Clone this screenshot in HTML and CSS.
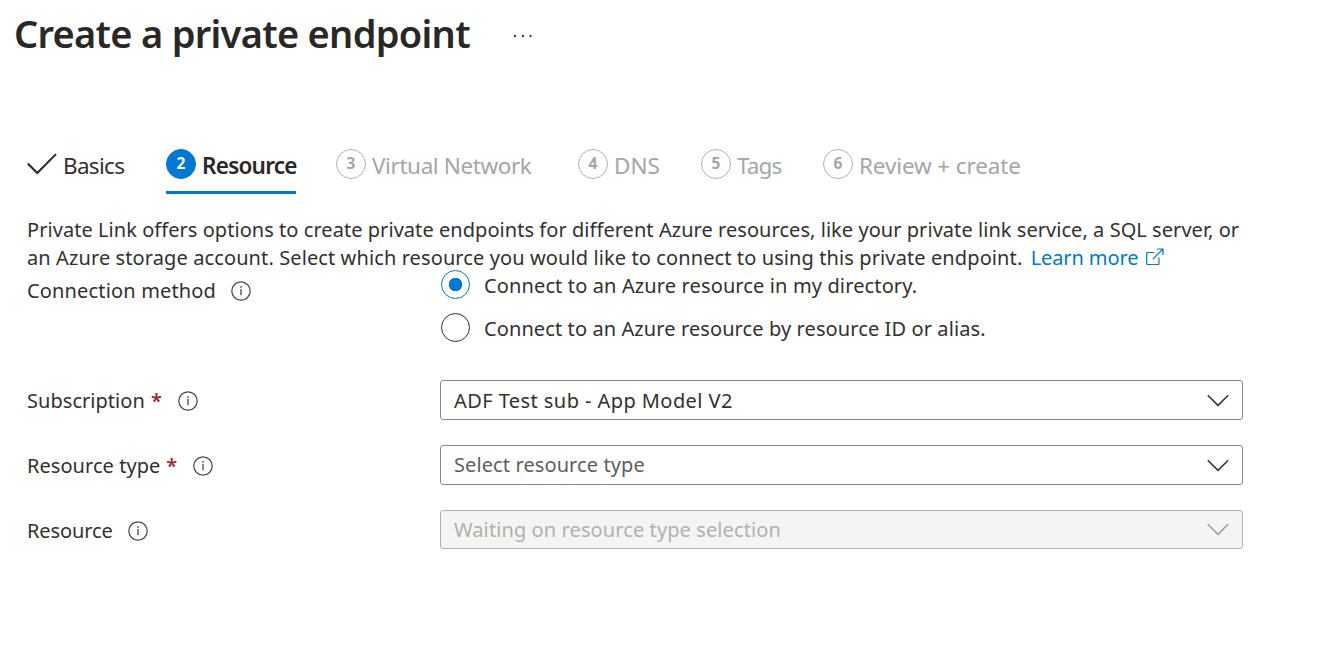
FILE: index.html
```html
<!DOCTYPE html>
<html lang="en">
<head>
<meta charset="utf-8">
<title>Create a private endpoint</title>
<link rel="stylesheet" href="styles.css">
</head>
<body>
<svg width="0" height="0" class="defs" aria-hidden="true">
  <symbol id="info" viewBox="0 0 20 20"><circle cx="10" cy="10" r="9.2" fill="none" stroke="#4c4a48" stroke-width="1.25"/><path d="M10 8.1v6.2" stroke="#4c4a48" stroke-width="1.3"/><circle cx="10" cy="5.9" r=".85" fill="#4c4a48"/></symbol>
  <symbol id="chevron" viewBox="0 0 22 13"><path d="M.8 1.2 11 11.4 21.2 1.2" fill="none" stroke="currentColor" stroke-width="1.5"/></symbol>
</svg>
<header class="header">
  <h1 class="title">Create a private endpoint</h1>
  <svg class="more" width="20" height="4" viewBox="0 0 20 4"><g fill="#323130"><circle cx="2" cy="2" r="1.15"/><circle cx="10" cy="2" r="1.15"/><circle cx="17.500" cy="2" r="1.15"/></g></svg>
</header>
<nav class="tabs">
  <div class="tab basics"><svg class="check" width="30" height="22" viewBox="0 0 30 22"><path d="M.8 10.5 10.3 20 29 1.1" fill="none" stroke="#292827" stroke-width="2"/></svg><span class="t-basics">Basics</span></div>
  <div class="tab active"><span class="num">2</span><span class="t-resource">Resource</span></div>
  <div class="tab vnet"><span class="num">3</span><span class="t-vnet">Virtual Network</span></div>
  <div class="tab dns"><span class="num">4</span><span class="t-dns">DNS</span></div>
  <div class="tab tags"><span class="num">5</span><span class="t-tags">Tags</span></div>
  <div class="tab review"><span class="num">6</span><span class="t-review">Review + create</span></div>
</nav>
<main class="form">
  <p class="intro"><span class="line one">Private Link offers options to create private endpoints for different Azure resources, like your private link service, a SQL server, or</span><span class="line two">an Azure storage account. Select which resource you would like to connect to using this private endpoint. <a class="link">Learn more</a><svg class="external" width="18" height="18" viewBox="0 0 18 18"><path d="M8 4.5H1.7Q.7 4.5.7 5.500V15.500Q.7 16.500 1.700 16.500H12Q13 16.500 13 15.500V9.500M6.800 11.200 17 1M11 1h6v6" fill="none" stroke="#0078d4" stroke-width="1.2"/></svg></span></p>
  <div class="row method">
    <div class="label"><span class="l-method">Connection method</span><svg class="info"><use href="#info"/></svg></div>
    <div class="radios">
      <div class="radio on"><i class="dot"></i><span class="r-one">Connect to an Azure resource in my directory.</span></div>
      <div class="radio"><i class="dot"></i><span class="r-two">Connect to an Azure resource by resource ID or alias.</span></div>
    </div>
  </div>
  <div class="row">
    <div class="label"><span class="l-sub">Subscription</span><b class="req">*</b><svg class="info"><use href="#info"/></svg></div>
    <div class="select"><span class="s-one">ADF Test sub - App Model V2</span><svg class="chevron"><use href="#chevron"/></svg></div>
  </div>
  <div class="row">
    <div class="label"><span class="l-type">Resource type</span><b class="req">*</b><svg class="info"><use href="#info"/></svg></div>
    <div class="select placeholder"><span class="s-two">Select resource type</span><svg class="chevron"><use href="#chevron"/></svg></div>
  </div>
  <div class="row">
    <div class="label"><span class="l-res">Resource</span><svg class="info"><use href="#info"/></svg></div>
    <div class="select disabled"><span class="s-three">Waiting on resource type selection</span><svg class="chevron"><use href="#chevron"/></svg></div>
  </div>
</main>
</body>
</html>
```
FILE: styles.css
```css
* { box-sizing: border-box; }
body { margin: 0; background: #fff; color: #323130; font: 20px/28px "Noto Sans", "Open Sans", sans-serif; height: 651px; overflow: hidden; }
.defs { display: block; height: 0; }
.header { display: flex; align-items: center; height: 70px; padding-left: 14px; }
.title { margin: 0; width: 499px; font-size: 38px; line-height: 66px; height: 70px; font-weight: 600; letter-spacing: -.71px; color: #292827; white-space: nowrap; }
.more { flex: none; margin-top: 2px; }
.tabs { display: flex; height: 124px; padding: 76px 0 0 27px; }
.tab { display: flex; flex: none; height: 48px; color: #a6a6a6; font-size: 22.5px; line-height: 40px; white-space: nowrap; }
.basics { width: 139px; color: #323130; }
.check { flex: none; margin: 7px 6px 0 0; }
.num { flex: none; width: 30px; height: 30px; margin: 3px 6px 0 0; border: 1.5px solid #b3b3b3; border-radius: 50%; font-size: 15.5px; line-height: 27px; font-weight: 700; text-align: center; }
.active { width: 130px; margin-right: 40px; border-bottom: 3px solid #0078d4; color: #292827; font-weight: 600; }
.active .num { background: #0078d4; border-color: #0078d4; color: #fff; }
.vnet { width: 242px; }
.dns { width: 123px; }
.tags { width: 122px; }
.t-basics { letter-spacing: -.7px; }
.t-resource { letter-spacing: -.75px; }
.t-vnet { letter-spacing: -.4px; }
.t-tags { letter-spacing: -.9px; }
.t-review { letter-spacing: -.13px; }
.form { padding: 22px 0 0 27px; }
.intro { margin: 0; }
.line { display: block; white-space: nowrap; }
.one { letter-spacing: .05px; }
.two { letter-spacing: .105px; }
.link { margin-left: 3px; color: #0078d4; letter-spacing: -.1px; }
.external { margin-left: 8px; vertical-align: -1px; }
.row { display: flex; height: 65px; }
.label { display: flex; flex: none; align-items: center; width: 413px; height: 42px; white-space: nowrap; }
.method { height: 108px; }
.method .label { margin-top: -2px; }
.info { flex: none; width: 20px; height: 20px; margin-left: 15px; }
.l-method { letter-spacing: .16px; }
.l-sub { letter-spacing: .04px; }
.l-type { letter-spacing: .05px; }
.l-res { letter-spacing: -.12px; }
.req { margin-left: 6px; color: #a4262c; font-weight: 600; }
.req + .info { margin-left: 16px; }
.radios { display: flex; flex-direction: column; gap: 15px; margin-top: -2px; }
.radio { display: flex; align-items: center; height: 28px; white-space: nowrap; }
.radio span { padding-top: 3px; }
.dot { width: 29px; height: 29px; margin: 0 14px 0 1px; border: 1.5px solid #323130; border-radius: 50%; }
.on .dot { border-color: #0078d4; background: radial-gradient(circle, #0078d4 6.4px, transparent 7px); }
.r-one { letter-spacing: .13px; }
.r-two { letter-spacing: .1px; }
.select { display: flex; align-items: center; justify-content: space-between; width: 803px; height: 40px; padding: 0 13.5px 0 13px; border: 1px solid #8a8886; border-radius: 3px; white-space: nowrap; }
.s-one { padding-top: 2px; letter-spacing: .43px; }
.s-two { letter-spacing: .1px; }
.s-three { letter-spacing: .1px; }
.chevron { width: 22px; height: 13px; }
.placeholder { color: #605e5c; }
.placeholder .chevron { color: #323130; }
.disabled { height: 39px; background: #f4f4f2; border-color: #b3b0ad; color: #b3b0ad; }
.disabled .chevron { color: #a19f9d; }
```
